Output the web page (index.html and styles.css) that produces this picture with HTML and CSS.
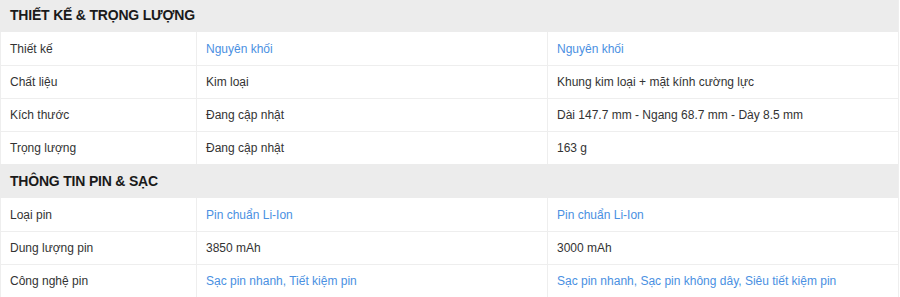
FILE: index.html
```html
<!DOCTYPE html>
<html lang="vi">
<head>
<meta charset="utf-8">
<link rel="stylesheet" href="styles.css">
</head>
<body>
<div class="specs">
  <div class="section first">THIẾT KẾ &amp; TRỌNG LƯỢNG</div>
  <div class="row">
    <div class="cell">Thiết kế</div>
    <div class="cell link">Nguyên khối</div>
    <div class="cell link">Nguyên khối</div>
  </div>
  <div class="row">
    <div class="cell">Chất liệu</div>
    <div class="cell">Kim loại</div>
    <div class="cell">Khung kim loại + mặt kính cường lực</div>
  </div>
  <div class="row">
    <div class="cell">Kích thước</div>
    <div class="cell">Đang cập nhật</div>
    <div class="cell">Dài 147.7 mm - Ngang 68.7 mm - Dày 8.5 mm</div>
  </div>
  <div class="row">
    <div class="cell">Trọng lượng</div>
    <div class="cell">Đang cập nhật</div>
    <div class="cell">163 g</div>
  </div>
  <div class="section">THÔNG TIN PIN &amp; SẠC</div>
  <div class="row">
    <div class="cell">Loại pin</div>
    <div class="cell link">Pin chuẩn Li-Ion</div>
    <div class="cell link">Pin chuẩn Li-Ion</div>
  </div>
  <div class="row">
    <div class="cell">Dung lượng pin</div>
    <div class="cell">3850 mAh</div>
    <div class="cell">3000 mAh</div>
  </div>
  <div class="row">
    <div class="cell">Công nghệ pin</div>
    <div class="cell link">Sạc pin nhanh, Tiết kiệm pin</div>
    <div class="cell link">Sạc pin nhanh, Sạc pin không dây, Siêu tiết kiệm pin</div>
  </div>
</div>
</body>
</html>
```
FILE: styles.css
```css
html, body {
  margin: 0;
  padding: 0;
  background: #fff;
}
body {
  font-family: "Liberation Sans", Roboto, Arial, sans-serif;
  font-size: 12px;
  color: #333;
}
.specs {
  width: 898px;
  border-right: 1px solid #eee;
}
.section {
  height: 34px;
  box-sizing: border-box;
  display: flex;
  align-items: center;
  padding-left: 10px;
  background: #ececec;
  color: #1a1a1a;
  font-weight: bold;
  font-size: 14px;
  letter-spacing: -0.2px;
}
.section.first {
  height: 32px;
  padding-bottom: 2px;
}
.row {
  display: grid;
  grid-template-columns: 196px 351px 351px;
  height: 33px;
  box-sizing: border-box;
  border-top: 1px solid #eee;
}
.section + .row {
  border-top: none;
}
.cell {
  display: flex;
  align-items: center;
  padding-left: 9px;
  border-left: 1px solid #eee;
  white-space: nowrap;
}
.link {
  color: #4a90e2;
}
```
